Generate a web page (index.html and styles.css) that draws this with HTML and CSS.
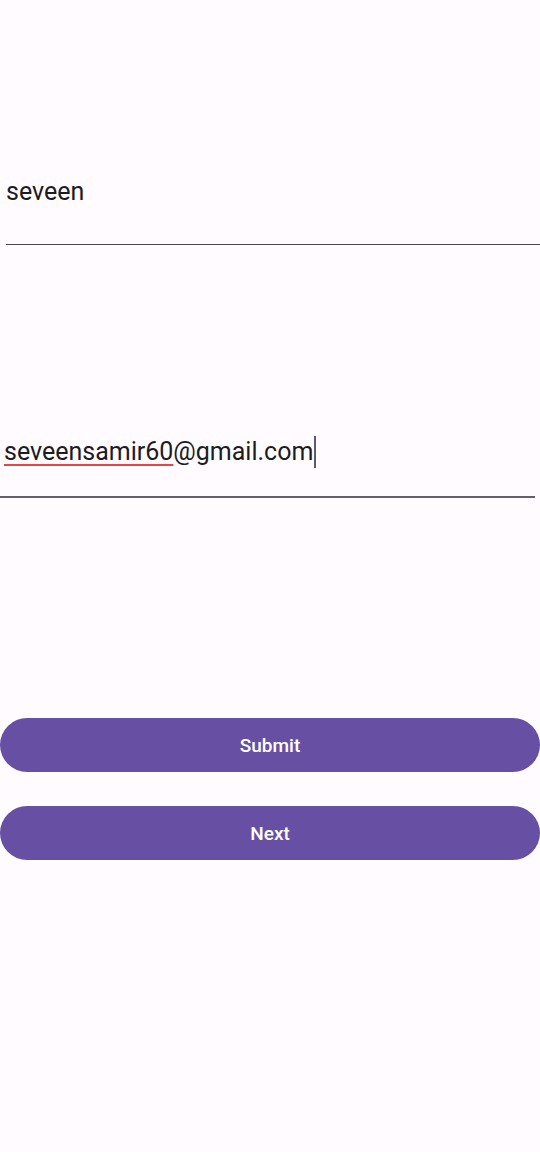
FILE: index.html
```html
<!DOCTYPE html>
<html>
<head>
<meta charset="utf-8">
<link rel="stylesheet" href="styles.css">
</head>
<body>
<main class="screen">
  <div class="field field-name">
    <span class="value">seveen</span>
  </div>
  <div class="field field-email">
    <span class="value"><span class="misspelled">seveensamir60</span>@gmail.com</span><span class="cursor"></span>
  </div>
  <div class="actions">
    <button class="btn">Submit</button>
    <button class="btn">Next</button>
  </div>
</main>
</body>
</html>
```
FILE: styles.css
```css
html, body {
  margin: 0;
  padding: 0;
  background: #FFFBFE;
}
.screen {
  width: 540px;
  height: 1152px;
  display: flex;
  flex-direction: column;
  font-family: Roboto, "Noto Sans", sans-serif;
  color: #1C1B1F;
}
.field {
  display: flex;
  align-items: center;
  font-size: 25px;
  line-height: 32px;
}
.field-name {
  margin-top: 176px;
  margin-left: 6px;
  padding-bottom: 36px;
  border-bottom: 1px solid #49454F;
}
.field-email {
  margin-top: 191px;
  width: 535px;
  padding-left: 4px;
  box-sizing: border-box;
  padding-bottom: 28px;
  border-bottom: 2px solid #655E73;
}
.misspelled {
  text-decoration: underline;
  text-decoration-color: #E04848;
  text-decoration-thickness: 2px;
  text-underline-offset: 4px;
}
.cursor {
  display: inline-block;
  width: 2px;
  height: 32px;
  margin-left: 1px;
  background: #5F5870;
}
.actions {
  margin-top: 220px;
  display: flex;
  flex-direction: column;
  gap: 34px;
}
.btn {
  height: 54px;
  width: 540px;
  border: none;
  border-radius: 27px;
  background: #6750A4;
  color: #FFFFFF;
  font-family: Roboto, "Noto Sans", sans-serif;
  font-weight: 500;
  font-size: 19px;
  padding: 0;
}
```
